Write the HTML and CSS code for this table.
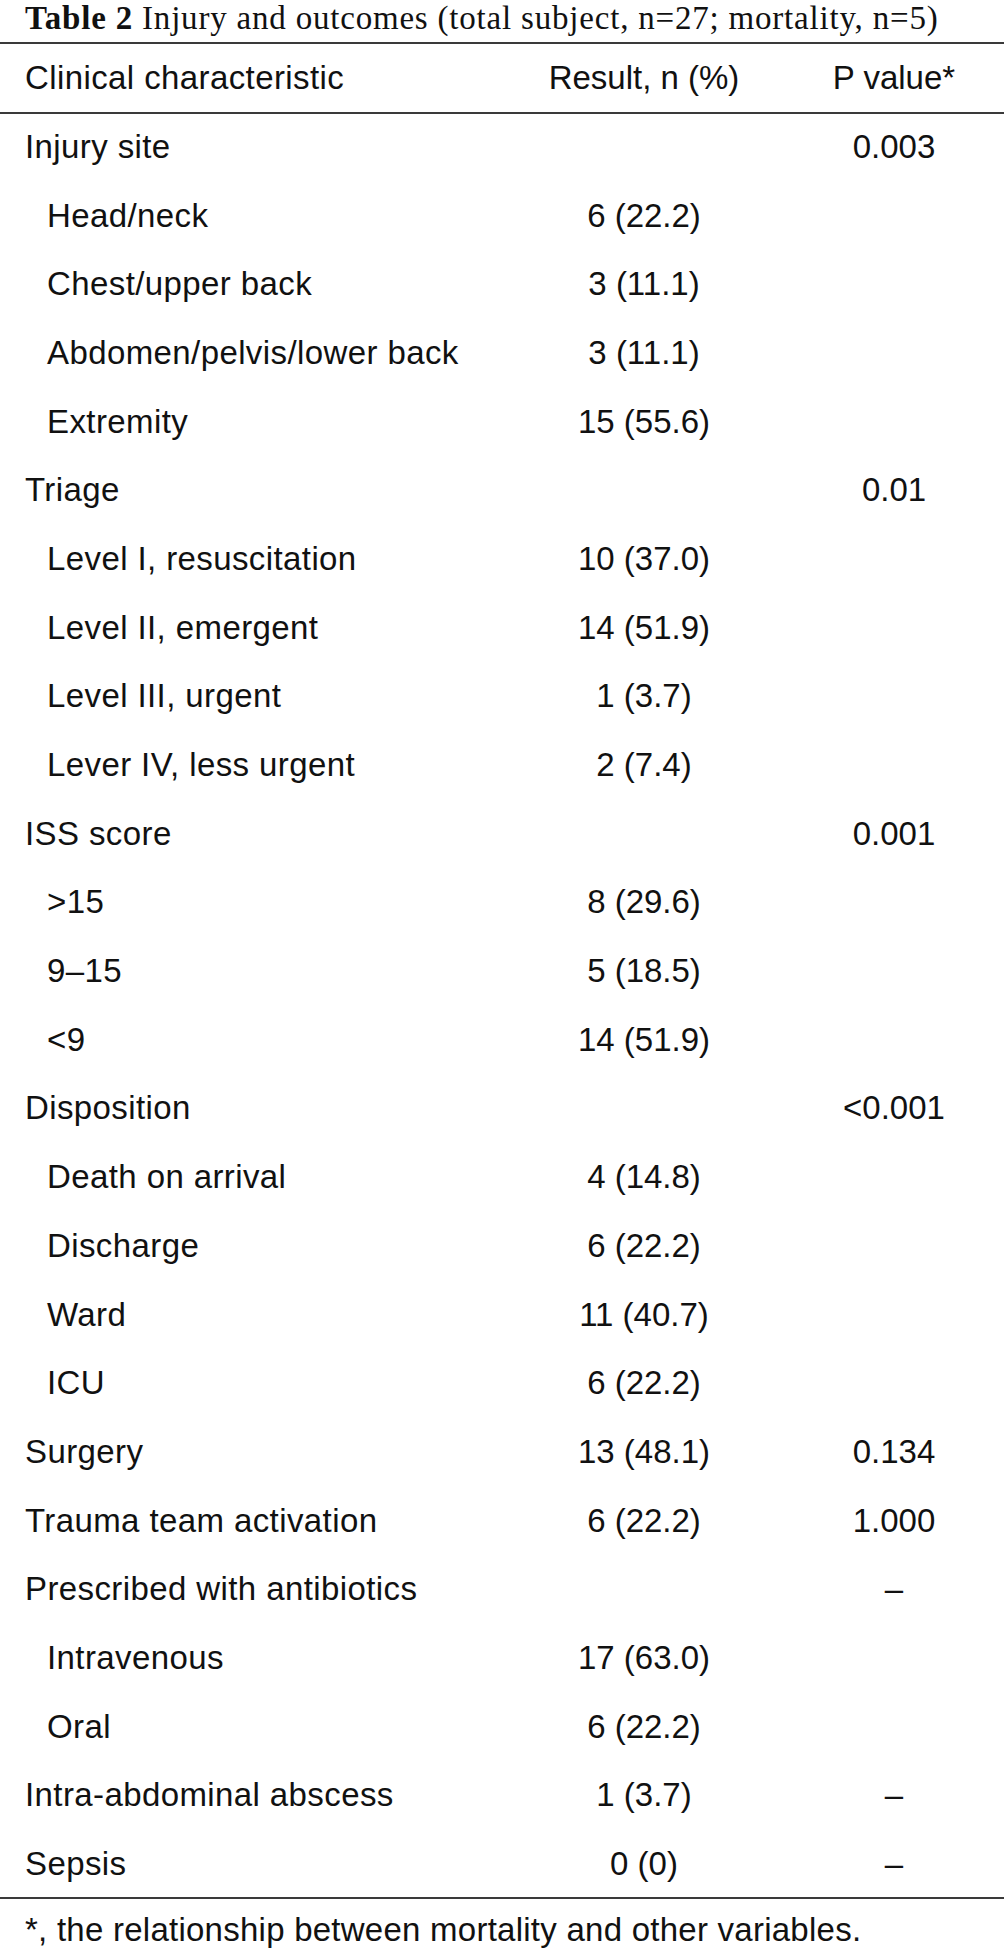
FILE: index.html
```html
<!DOCTYPE html>
<html>
<head>
<meta charset="utf-8">
<link rel="stylesheet" href="styles.css">
</head>
<body>
<div class="page">
  <div class="title"><b>Table 2</b> Injury and outcomes (total subject, n=27; mortality, n=5)</div>
  <table class="tbl">
    <colgroup><col class="c1"><col class="c2"><col class="c3"></colgroup>
    <thead>
      <tr><th class="lbl">Clinical characteristic</th><th>Result, n (%)</th><th>P value*</th></tr>
    </thead>
    <tbody>
      <tr><td class="lbl">Injury site</td><td></td><td>0.003</td></tr>
      <tr><td class="lbl sub">Head/neck</td><td>6 (22.2)</td><td></td></tr>
      <tr><td class="lbl sub">Chest/upper back</td><td>3 (11.1)</td><td></td></tr>
      <tr><td class="lbl sub">Abdomen/pelvis/lower back</td><td>3 (11.1)</td><td></td></tr>
      <tr><td class="lbl sub">Extremity</td><td>15 (55.6)</td><td></td></tr>
      <tr><td class="lbl">Triage</td><td></td><td>0.01</td></tr>
      <tr><td class="lbl sub">Level I, resuscitation</td><td>10 (37.0)</td><td></td></tr>
      <tr><td class="lbl sub">Level II, emergent</td><td>14 (51.9)</td><td></td></tr>
      <tr><td class="lbl sub">Level III, urgent</td><td>1 (3.7)</td><td></td></tr>
      <tr><td class="lbl sub">Lever IV, less urgent</td><td>2 (7.4)</td><td></td></tr>
      <tr><td class="lbl">ISS score</td><td></td><td>0.001</td></tr>
      <tr><td class="lbl sub">&gt;15</td><td>8 (29.6)</td><td></td></tr>
      <tr><td class="lbl sub">9–15</td><td>5 (18.5)</td><td></td></tr>
      <tr><td class="lbl sub">&lt;9</td><td>14 (51.9)</td><td></td></tr>
      <tr><td class="lbl">Disposition</td><td></td><td>&lt;0.001</td></tr>
      <tr><td class="lbl sub">Death on arrival</td><td>4 (14.8)</td><td></td></tr>
      <tr><td class="lbl sub">Discharge</td><td>6 (22.2)</td><td></td></tr>
      <tr><td class="lbl sub">Ward</td><td>11 (40.7)</td><td></td></tr>
      <tr><td class="lbl sub">ICU</td><td>6 (22.2)</td><td></td></tr>
      <tr><td class="lbl">Surgery</td><td>13 (48.1)</td><td>0.134</td></tr>
      <tr><td class="lbl">Trauma team activation</td><td>6 (22.2)</td><td>1.000</td></tr>
      <tr><td class="lbl">Prescribed with antibiotics</td><td></td><td>–</td></tr>
      <tr><td class="lbl sub">Intravenous</td><td>17 (63.0)</td><td></td></tr>
      <tr><td class="lbl sub">Oral</td><td>6 (22.2)</td><td></td></tr>
      <tr><td class="lbl">Intra-abdominal abscess</td><td>1 (3.7)</td><td>–</td></tr>
      <tr><td class="lbl">Sepsis</td><td>0 (0)</td><td>–</td></tr>
    </tbody>
  </table>
  <div class="foot">*, the relationship between mortality and other variables.</div>
</div>
</body>
</html>
```

FILE: styles.css
```css
html, body {
  margin: 0;
  padding: 0;
  background: #fff;
}
.page {
  width: 1004px;
  color: #111;
  font-family: "Liberation Sans", Arial, sans-serif;
  font-size: 33px;
}
.title {
  font-family: "Liberation Serif", "Times New Roman", serif;
  font-size: 33px;
  letter-spacing: 0.8px;
  line-height: 37px;
  height: 42px;
  padding-left: 25px;
  white-space: nowrap;
  color: #111;
}
.title b {
  font-weight: bold;
}
.tbl {
  width: 1004px;
  border-collapse: collapse;
  table-layout: fixed;
}
.c1 { width: 504px; }
.c2 { width: 280px; }
.c3 { width: 220px; }
.tbl th, .tbl td {
  padding: 0;
  text-align: center;
  vertical-align: middle;
  font-weight: normal;
  white-space: nowrap;
}
.tbl thead tr {
  height: 69.5px;
  border-top: 2px solid #3a3a3a;
  border-bottom: 2px solid #3a3a3a;
}
.tbl tbody tr {
  height: 68.7px;
}
.tbl tbody tr:last-child {
  border-bottom: 2px solid #3a3a3a;
}
.tbl .lbl {
  text-align: left;
  padding-left: 25px;
  letter-spacing: 0.4px;
}
.tbl .lbl.sub {
  padding-left: 47px;
}
.foot {
  padding-top: 12px;
  padding-left: 25px;
  letter-spacing: 0.25px;
  white-space: nowrap;
}
```
